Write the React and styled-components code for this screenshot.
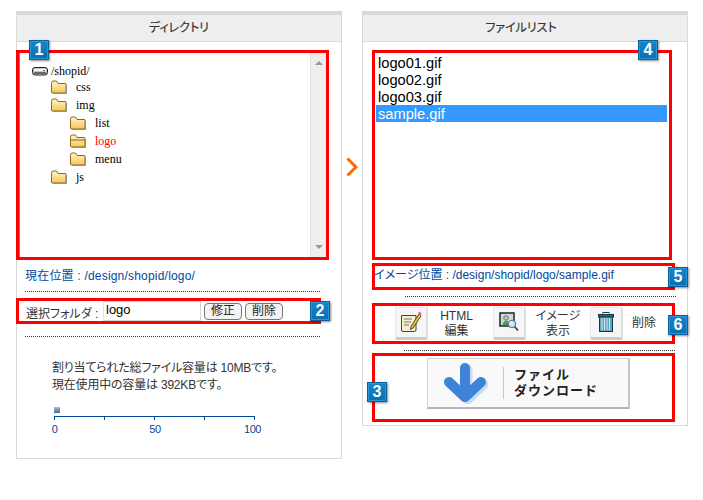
import React from 'react';
import styled, { createGlobalStyle } from 'styled-components';

const Global = createGlobalStyle`
  html, body {
    margin: 0;
    padding: 0;
    background: #fff;
  }
  body {
    font-family: "Liberation Sans", "Noto Sans CJK JP", sans-serif;
    font-size: 12px;
    color: #333;
    font-feature-settings: "palt";
  }
`;

const Page = styled.div`
  display: flex;
  align-items: flex-start;
  padding: 11px 0 0 16px;
  width: 703px;
  height: 500px;
  box-sizing: border-box;
  overflow: hidden;
`;

const Panel = styled.section`
  width: 326px;
  height: ${p => p.$h}px;
  box-sizing: border-box;
  border: 1px solid #d9d9d9;
  border-top-width: 4px;
  flex-shrink: 0;
`;

const Header = styled.h2`
  margin: 0;
  height: 27px;
  box-sizing: border-box;
  background: #eee;
  border-bottom: 1px solid #d9d9d9;
  padding-right: ${p => p.$shift || 0}px;
  font-size: 12px;
  font-weight: normal;
  line-height: 26px;
  text-align: center;
  color: #333;
  -webkit-text-stroke: 0.2px #333;
`;

const RedBox = styled.div`
  position: relative;
  box-sizing: border-box;
  border: 3px solid #f00;
  width: ${p => p.$w}px;
  height: ${p => p.$h}px;
  margin-top: ${p => p.$top}px;
  margin-left: ${p => p.$left}px;
`;

const Badge = styled.span`
  position: absolute;
  left: ${p => p.$x}px;
  top: ${p => p.$y}px;
  z-index: 2;
  width: 20px;
  height: 20px;
  box-sizing: border-box;
  border: 1px solid #0b5f97;
  box-shadow: inset 0 0 0 1px #2a94d8, 1px 1px 2px rgba(0, 0, 0, 0.45);
  background: linear-gradient(#1685cc, #0a6fb0);
  color: #fff;
  font-family: "Liberation Sans", sans-serif;
  font-size: 16px;
  font-weight: bold;
  line-height: 18px;
  text-align: center;
`;

const TreeFrame = styled.div`
  display: flex;
  height: 100%;
  border-left: 1px solid #7f8a94;
`;

const Tree = styled.ul`
  flex: 1;
  list-style: none;
  margin: 0;
  padding: 11px 0 0 12px;
  font-family: "Liberation Serif", serif;
  font-size: 12px;
  color: #000;
`;

const TreeRow = styled.li`
  display: flex;
  align-items: center;
  height: 18px;
  margin-left: ${p => p.$level * 19}px;
  margin-top: ${p => (p.$root ? -2 : 0)}px;
  margin-bottom: ${p => (p.$root ? -2 : 0)}px;
  color: ${p => (p.$active ? '#f00' : '#000')};
`;

const TreeLabel = styled.span`
  margin-left: ${p => (p.$root ? 3 : 9)}px;
`;

const Scrollbar = styled.div`
  width: 16px;
  background: #eee;
  border-left: 1px solid #e3e3e3;
  display: flex;
  flex-direction: column;
  justify-content: space-between;
  align-items: center;
  padding: 8px 0;
  box-sizing: border-box;
`;

const Arrow = styled.i`
  width: 0;
  height: 0;
  border-left: 4px solid transparent;
  border-right: 4px solid transparent;
  border-${p => (p.$up ? 'bottom' : 'top')}: 4px solid #999;
`;

const PathText = styled.p`
  margin: ${p => p.$top}px 0 0 ${p => p.$left}px;
  color: #00489c;
  font-size: 12px;
  line-height: 16px;
  white-space: pre;
  letter-spacing: ${p => p.$ls || 0}px;
`;

const Dots = styled.hr`
  border: 0;
  border-top: 1px dotted #333;
  height: 0;
  width: ${p => p.$w}px;
  margin: ${p => p.$top}px 0 0 ${p => p.$left}px;
`;

const FolderForm = styled.div`
  display: flex;
  align-items: center;
  height: 100%;
  padding-left: 7px;
`;

const FormLabel = styled.label`
  width: 77px;
  padding-top: 2px;
  white-space: pre;
  font-size: 12px;
  color: #333;
`;

const NameField = styled.div`
  width: 98px;
  height: 20px;
  box-sizing: border-box;
  border: 1px solid #d4d4d4;
  border-left-color: #e4e4e4;
  background: #fff;
  padding-left: 2px;
  font-size: 13px;
  line-height: 16px;
  color: #000;
`;

const SmallButton = styled.button`
  width: ${p => p.$w}px;
  height: 17px;
  margin-left: ${p => p.$left}px;
  padding: 0;
  box-sizing: border-box;
  border: 1px solid #777;
  border-radius: 4px;
  background: #f4f4f4;
  font-family: inherit;
  font-size: 12px;
  line-height: 14px;
  color: #222;
`;

const Quota = styled.p`
  margin: 23px 0 0 35px;
  font-size: 12px;
  line-height: 17px;
  letter-spacing: -0.2px;
  color: #333;
`;

const Meter = styled.div`
  margin: 13px 0 0 37px;
  width: 201px;
`;

const MeterFill = styled.div`
  width: 6px;
  height: 6px;
  background: linear-gradient(#a9bfd8, #3f6f9f);
  margin-bottom: 3px;
`;

const Ticks = styled.div`
  display: flex;
  justify-content: space-between;
  border-top: 1px solid #00489c;
  height: 3px;
`;

const Tick = styled.i`
  width: 1px;
  background: #00489c;
`;

const Scale = styled.div`
  display: flex;
  justify-content: space-between;
  margin-top: 2px;
  color: #00489c;
  font-size: 11px;
  line-height: 14px;
  letter-spacing: -0.4px;
`;

const ScaleNum = styled.span`
  width: 1px;
  display: flex;
  justify-content: center;
  &:nth-child(2) {
    margin-left: 5px;
  }
  &:last-child {
    width: 5px;
  }
`;

const Next = styled.svg`
  flex-shrink: 0;
  margin: 146px 4px 0 4px;
`;

const FileList = styled.ul`
  list-style: none;
  margin: 0;
  padding: 1px 2px 0 1px;
  font-size: 14.67px;
  color: #000;
`;

const FileRow = styled.li`
  height: 17px;
  box-sizing: border-box;
  padding: 1px 0 0 2px;
  line-height: 17px;
  background: ${p => (p.$on ? '#3399ff' : 'transparent')};
  color: ${p => (p.$on ? '#fff' : '#000')};
`;

const Toolbar = styled.div`
  display: flex;
  align-items: center;
  height: 100%;
  padding-left: 20px;
`;

const ToolButton = styled.button`
  display: flex;
  align-items: center;
  justify-content: center;
  width: 33px;
  height: 33px;
  padding: 0 0 1px;
  flex-shrink: 0;
  box-sizing: border-box;
  border: 1px solid #e8e8e8;
  border-right: 2px solid #ddd;
  border-bottom: 3px solid #ccc;
  border-radius: 2px;
  background: #f6f6f6;
`;

const ToolLabel = styled.span`
  width: ${p => p.$w}px;
  box-sizing: border-box;
  padding-right: ${p => p.$shift || 0}px;
  flex-shrink: 0;
  text-align: center;
  font-size: 12px;
  line-height: 15px;
  color: #333;
`;

const DownloadWrap = styled.div`
  padding: 2px 0 0 52px;
`;

const Download = styled.button`
  display: flex;
  align-items: center;
  width: 203px;
  height: 51px;
  padding: 0 0 0 15px;
  box-sizing: border-box;
  border: 1px solid #d4d4d4;
  border-bottom: 2px solid #b5b5bd;
  border-right: 2px solid #c5c5c5;
  background: #f9f9f9;
  font-family: inherit;
`;

const Divider = styled.i`
  width: 1px;
  height: 32px;
  background: #c9c9c9;
  margin: 0 10px 0 14px;
`;

const DownloadText = styled.span`
  font-size: 13px;
  font-weight: bold;
  line-height: 16px;
  letter-spacing: 1px;
  color: #222;
  text-align: left;
`;

const Drive = () => (
  <svg width="16" height="9" viewBox="0 0 16 9">
    <rect x="0.5" y="0.5" width="15" height="7.5" rx="2.5" fill="#c9c9c9" stroke="#222" />
    <rect x="2" y="2" width="12" height="2" fill="#f2f2f2" />
    <rect x="2" y="5" width="12" height="2" fill="#666" />
    <rect x="11" y="3" width="2" height="1" fill="#3a3" />
  </svg>
);

const Folder = ({ open }) => (
  <svg width="16" height="14" viewBox="0 0 16 14">
    <defs>
      <linearGradient id="fold" x1="0" y1="0" x2="0" y2="1">
        <stop offset="0" stopColor="#fff6c8" />
        <stop offset="1" stopColor="#f6c65a" />
      </linearGradient>
    </defs>
    <path d="M0.5 3.5 V12 Q0.5 13 1.5 13 H14 Q15 13 15 12 V4 Q15 3.5 14 3.5 H7 L5.5 1 H2 Q0.5 1 0.5 3.5 Z" fill="url(#fold)" stroke="#8a6a22" />
    <path d="M15.5 5 V13.5 H2" fill="none" stroke="#8f8f8f" />
    {open && <path d="M0.5 6 H15" stroke="#8a6a22" fill="none" />}
  </svg>
);

const NoteIcon = () => (
  <svg width="22" height="22" viewBox="0 0 22 22">
    <path d="M1.5 4.5 H16 V19 Q16 20.5 14.5 20.5 H3 Q1.5 20.5 1.5 19 Z" fill="#f6eecf" stroke="#4a4436" />
    <path d="M4 8 H12 M4 11 H11 M4 14 H9" stroke="#777" />
    <path d="M19 3 L21 5 L13 17 L10.5 18.5 L11 15.5 Z" fill="#f4c430" stroke="#222" strokeWidth="0.8" />
    <path d="M18 1.5 L20 .5 L21.5 3 L20.5 5 Z" fill="#e060b0" />
  </svg>
);

const ImageIcon = () => (
  <svg width="20" height="20" viewBox="0 0 20 20">
    <rect x="1" y="1" width="14" height="13" fill="#bfe0e8" stroke="#222" strokeWidth="1.5" />
    <circle cx="7" cy="6" r="2.3" fill="#f3c08a" stroke="#333" strokeWidth="0.6" />
    <path d="M3.5 13 Q4 9 7 9 Q10 9 10.5 13 Z" fill="#4c9a4c" />
    <circle cx="13" cy="12" r="3.8" fill="#d6eef8" fillOpacity="0.9" stroke="#4a6f88" />
    <path d="M15.8 14.8 L19 18.5" stroke="#333" strokeWidth="1.6" />
  </svg>
);

const TrashIcon = () => (
  <svg width="16" height="20" viewBox="0 0 16 20">
    <rect x="5" y="0.5" width="6" height="2" fill="none" stroke="#14384a" />
    <rect x="0.5" y="2.5" width="15" height="2.5" fill="#2e6f86" stroke="#14384a" />
    <rect x="1.5" y="5" width="13" height="14.5" fill="#63a6bb" stroke="#14384a" />
    <path d="M4 6 V18 M6.5 6 V18 M9 6 V18 M11.5 6 V18" stroke="#cfe6ec" strokeWidth="1" />
  </svg>
);

const DownArrow = () => (
  <svg width="46" height="42" viewBox="0 0 46 42">
    <path d="M23 6 V34 M7 21 L23 36 L39 21" fill="none" stroke="#c9dcf4" strokeWidth="10" strokeLinecap="round" strokeLinejoin="round" transform="translate(1.5 1.5)" />
    <path d="M22 6 V33 M6 20 L22 35 L38 20" fill="none" stroke="#3f83d8" strokeWidth="10" strokeLinecap="round" strokeLinejoin="round" />
  </svg>
);

const tree = [
  { name: 'css', level: 1 },
  { name: 'img', level: 1 },
  { name: 'list', level: 2 },
  { name: 'logo', level: 2, active: true },
  { name: 'menu', level: 2 },
  { name: 'js', level: 1 },
];

const files = ['logo01.gif', 'logo02.gif', 'logo03.gif', 'sample.gif'];

export default function App() {
  return (
    <Page>
      <Global />
      <Panel $h={448}>
        <Header>ディレクトリ</Header>
        <RedBox $w={313} $h={210} $top={8} $left={-1}>
          <Badge $x={10} $y={-13}>1</Badge>
          <TreeFrame>
            <Tree>
              <TreeRow $level={0} $root>
                <Drive />
                <TreeLabel $root>/shopid/</TreeLabel>
              </TreeRow>
              {tree.map(item => (
                <TreeRow key={item.name} $level={item.level} $active={item.active}>
                  <Folder open={item.active} />
                  <TreeLabel>{item.name}</TreeLabel>
                </TreeRow>
              ))}
            </Tree>
            <Scrollbar>
              <Arrow $up />
              <Arrow />
            </Scrollbar>
          </TreeFrame>
        </RedBox>
        <PathText $top={8} $left={8} $ls={0.2}>現在位置 : /design/shopid/logo/</PathText>
        <Dots $w={295} $top={7} $left={8} />
        <RedBox $w={305} $h={26} $top={6} $left={-1}>
          <Badge $x={291} $y={0}>2</Badge>
          <FolderForm>
            <FormLabel>選択フォルダ : </FormLabel>
            <NameField>logo</NameField>
            <SmallButton $w={38} $left={3}>修正</SmallButton>
            <SmallButton $w={38} $left={3}>削除</SmallButton>
          </FolderForm>
        </RedBox>
        <Dots $w={295} $top={12} $left={8} />
        <Quota>
          割り当てられた総ファイル容量は 10MBです。<br />
          現在使用中の容量は 392KBです。
        </Quota>
        <Meter>
          <MeterFill />
          <Ticks>
            <Tick /><Tick /><Tick /><Tick /><Tick />
          </Ticks>
          <Scale>
            <ScaleNum>0</ScaleNum>
            <ScaleNum>50</ScaleNum>
            <ScaleNum>100</ScaleNum>
          </Scale>
        </Meter>
      </Panel>

      <Next width="12" height="20" viewBox="0 0 12 20">
        <path d="M1.5 1.5 L10 10 L1.5 18.5" fill="none" stroke="#ff6600" strokeWidth="3" />
      </Next>

      <Panel $h={415}>
        <Header $shift={8}>ファイルリスト</Header>
        <RedBox $w={300} $h={210} $top={8} $left={9}>
          <Badge $x={263} $y={-13}>4</Badge>
          <FileList>
            {files.map(name => (
              <FileRow key={name} $on={name === 'sample.gif'}>{name}</FileRow>
            ))}
          </FileList>
        </RedBox>
        <RedBox $w={303} $h={27} $top={3} $left={9}>
          <Badge $x={293} $y={1}>5</Badge>
          <PathText $top={1} $left={-1}>イメージ位置 : /design/shopid/logo/sample.gif</PathText>
        </RedBox>
        <Dots $w={271} $top={6} $left={42} />
        <RedBox $w={303} $h={41} $top={6} $left={9}>
          <Badge $x={293} $y={9}>6</Badge>
          <Toolbar>
            <ToolButton><NoteIcon /></ToolButton>
            <ToolLabel $w={65} $shift={8}>HTML<br />編集</ToolLabel>
            <ToolButton><ImageIcon /></ToolButton>
            <ToolLabel $w={64}>イメージ<br />表示</ToolLabel>
            <ToolButton><TrashIcon /></ToolButton>
            <ToolLabel $w={42}>削除</ToolLabel>
          </Toolbar>
        </RedBox>
        <Dots $w={271} $top={6} $left={41} />
        <RedBox $w={303} $h={69} $top={2} $left={9}>
          <Badge $x={-8} $y={26}>3</Badge>
          <DownloadWrap>
            <Download>
              <DownArrow />
              <Divider />
              <DownloadText>ファイル<br />ダウンロード</DownloadText>
            </Download>
          </DownloadWrap>
        </RedBox>
      </Panel>
    </Page>
  );
}
